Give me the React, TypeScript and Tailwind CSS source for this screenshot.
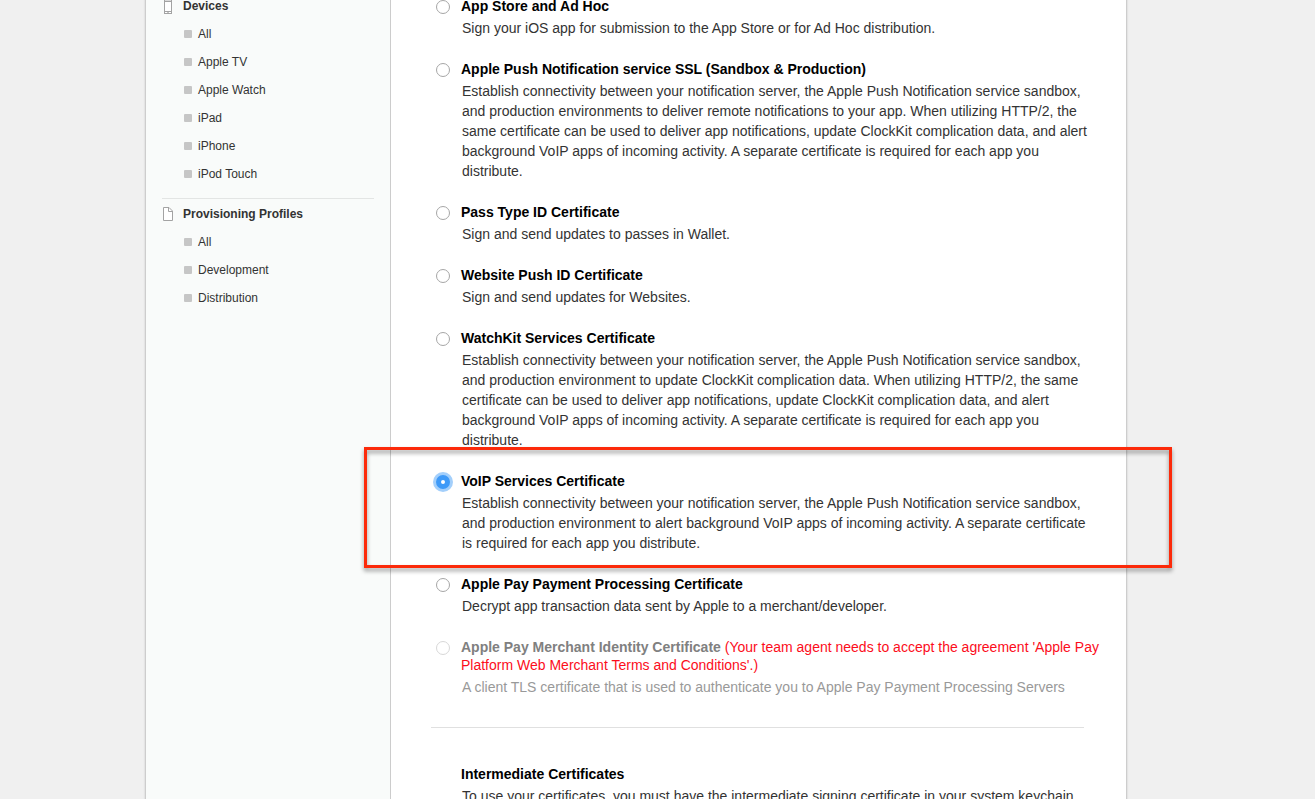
import { useState } from "react";
import type { ReactNode } from "react";

type Certificate = {
  id: string;
  title: string;
  text: string;
  notice?: string;
};

const devices = ["All", "Apple TV", "Apple Watch", "iPad", "iPhone", "iPod Touch"];
const profiles = ["All", "Development", "Distribution"];

const certificates: Certificate[] = [
  {
    id: "app-store",
    title: "App Store and Ad Hoc",
    text: "Sign your iOS app for submission to the App Store or for Ad Hoc distribution.",
  },
  {
    id: "push-ssl",
    title: "Apple Push Notification service SSL (Sandbox & Production)",
    text: "Establish connectivity between your notification server, the Apple Push Notification service sandbox,\nand production environments to deliver remote notifications to your app. When utilizing HTTP/2, the\nsame certificate can be used to deliver app notifications, update ClockKit complication data, and alert\nbackground VoIP apps of incoming activity. A separate certificate is required for each app you\ndistribute.",
  },
  {
    id: "pass-type",
    title: "Pass Type ID Certificate",
    text: "Sign and send updates to passes in Wallet.",
  },
  {
    id: "website-push",
    title: "Website Push ID Certificate",
    text: "Sign and send updates for Websites.",
  },
  {
    id: "watchkit",
    title: "WatchKit Services Certificate",
    text: "Establish connectivity between your notification server, the Apple Push Notification service sandbox,\nand production environment to update ClockKit complication data. When utilizing HTTP/2, the same\ncertificate can be used to deliver app notifications, update ClockKit complication data, and alert\nbackground VoIP apps of incoming activity. A separate certificate is required for each app you\ndistribute.",
  },
  {
    id: "voip",
    title: "VoIP Services Certificate",
    text: "Establish connectivity between your notification server, the Apple Push Notification service sandbox,\nand production environment to alert background VoIP apps of incoming activity. A separate certificate\nis required for each app you distribute.",
  },
  {
    id: "apple-pay",
    title: "Apple Pay Payment Processing Certificate",
    text: "Decrypt app transaction data sent by Apple to a merchant/developer.",
  },
  {
    id: "merchant",
    title: "Apple Pay Merchant Identity Certificate",
    text: "A client TLS certificate that is used to authenticate you to Apple Pay Payment Processing Servers",
    notice:
      "(Your team agent needs to accept the agreement 'Apple Pay\nPlatform Web Merchant Terms and Conditions'.)",
  },
];

function DeviceIcon() {
  return (
    <svg width="10" height="16" viewBox="0 0 10 16" fill="none" stroke="#a3a3a3" aria-hidden="true">
      <rect x="1.5" y="0.5" width="7" height="15" fill="#fff" />
      <path d="M1 1h8v2h-8z" fill="#d9d9d9" stroke="none" />
      <path d="M1.5 0.5v15M8.5 0.5v15M1.5 3.5h7M1.5 13.5h7" />
      <path d="M4 14.5h2" stroke="#c4c4c4" />
    </svg>
  );
}

function FileIcon() {
  return (
    <svg width="10" height="14" viewBox="0 0 10 14" fill="none" stroke="#a3a3a3" aria-hidden="true">
      <path d="M0.5 0.5h5.5l3.5 3.5v9.5h-9z" fill="#fff" />
      <path d="M5.5 0.5v4h4" />
    </svg>
  );
}

function NavGroup({ title, icon, items }: { title: string; icon: ReactNode; items: string[] }) {
  return (
    <section>
      <h2 className="flex h-7 items-center font-bold text-[#333]">
        <span className="flex w-[21px] pl-px">{icon}</span>
        {title}
      </h2>
      <ul>
        {items.map((item) => (
          <li key={item}>
            <a href="#" className="flex h-7 items-center gap-[6px] pl-[22px]">
              <span className="size-2 rounded-[1px] bg-[#c6c6c6]" />
              {item}
            </a>
          </li>
        ))}
      </ul>
    </section>
  );
}

function CertificateOption({
  certificate,
  checked,
  onSelect,
}: {
  certificate: Certificate;
  checked: boolean;
  onSelect: () => void;
}) {
  const { id, title, text, notice } = certificate;
  const disabled = notice !== undefined;
  return (
    <div className="relative flex gap-[11px] pl-[45px]">
      <input
        id={id}
        type="radio"
        name="certificate"
        checked={checked}
        disabled={disabled}
        onChange={onSelect}
        aria-describedby={`${id}-text`}
        className="mt-[3px] size-[14px] shrink-0 appearance-none rounded-full border border-[#a6a6a6] bg-white outline-none checked:border-[5px] checked:border-[#3e9af8] checked:ring-3 checked:ring-[#a3cffb] disabled:border-[#d8d8d8]"
      />
      <div className="min-w-0">
        <label
          htmlFor={id}
          className={
            disabled
              ? "block leading-[18px] font-bold whitespace-pre-line text-[#808080]"
              : "block leading-[18px] font-bold text-black"
          }
        >
          {title}
          {notice && <span className="font-normal text-[#fc0d1b]"> {notice}</span>}
        </label>
        <p
          id={`${id}-text`}
          className={
            disabled
              ? "mt-[3px] pl-px leading-5 whitespace-pre-line text-[#999]"
              : "mt-[3px] pl-px leading-5 whitespace-pre-line text-[#333]"
          }
        >
          {text}
        </p>
      </div>
      {id === "voip" && (
        <div className="pointer-events-none absolute -top-[25px] -right-[46px] -bottom-[15px] -left-[27px] border-3 border-[#fc2a0a] drop-shadow-[0_3px_2px_rgba(0,0,0,0.4)]" />
      )}
    </div>
  );
}

export default function App() {
  const [selected, setSelected] = useState("voip");

  return (
    <div className="flex h-screen justify-center overflow-hidden bg-[#f0f0f0] pr-[43px] font-['Liberation_Sans',Arial,sans-serif]">
      <div className="-mt-2 flex w-full max-w-[982px] self-start border-x border-[#cdcdcd] bg-white shadow-[0_0_2px_rgba(0,0,0,0.15)]">
        <nav
          aria-label="Account resources"
          className="w-[245px] shrink-0 border-r border-[#ccc] bg-[#f9fbfa] px-4 text-xs text-[#333]"
        >
          <NavGroup title="Devices" icon={<DeviceIcon />} items={devices} />
          <hr className="mt-[10px] mb-px border-[#e3e5e4]" />
          <NavGroup title="Provisioning Profiles" icon={<FileIcon />} items={profiles} />
        </nav>
        <main className="min-w-0 grow pt-[5px] pb-10 text-sm">
          <form className="flex flex-col gap-[22px]">
            {certificates.map((certificate) => (
              <CertificateOption
                key={certificate.id}
                certificate={certificate}
                checked={certificate.id === selected}
                onSelect={() => setSelected(certificate.id)}
              />
            ))}
          </form>
          <hr className="mt-[30px] mr-[42px] ml-10 border-[#e0e0e0]" />
          <section className="mt-[37px] pl-[70px]">
            <h2 className="leading-[18px] font-bold text-black">Intermediate Certificates</h2>
            <p className="mt-[3px] pl-px leading-5 text-[#333]">
              To use your certificates, you must have the intermediate signing certificate in your system keychain.
            </p>
          </section>
        </main>
      </div>
    </div>
  );
}
